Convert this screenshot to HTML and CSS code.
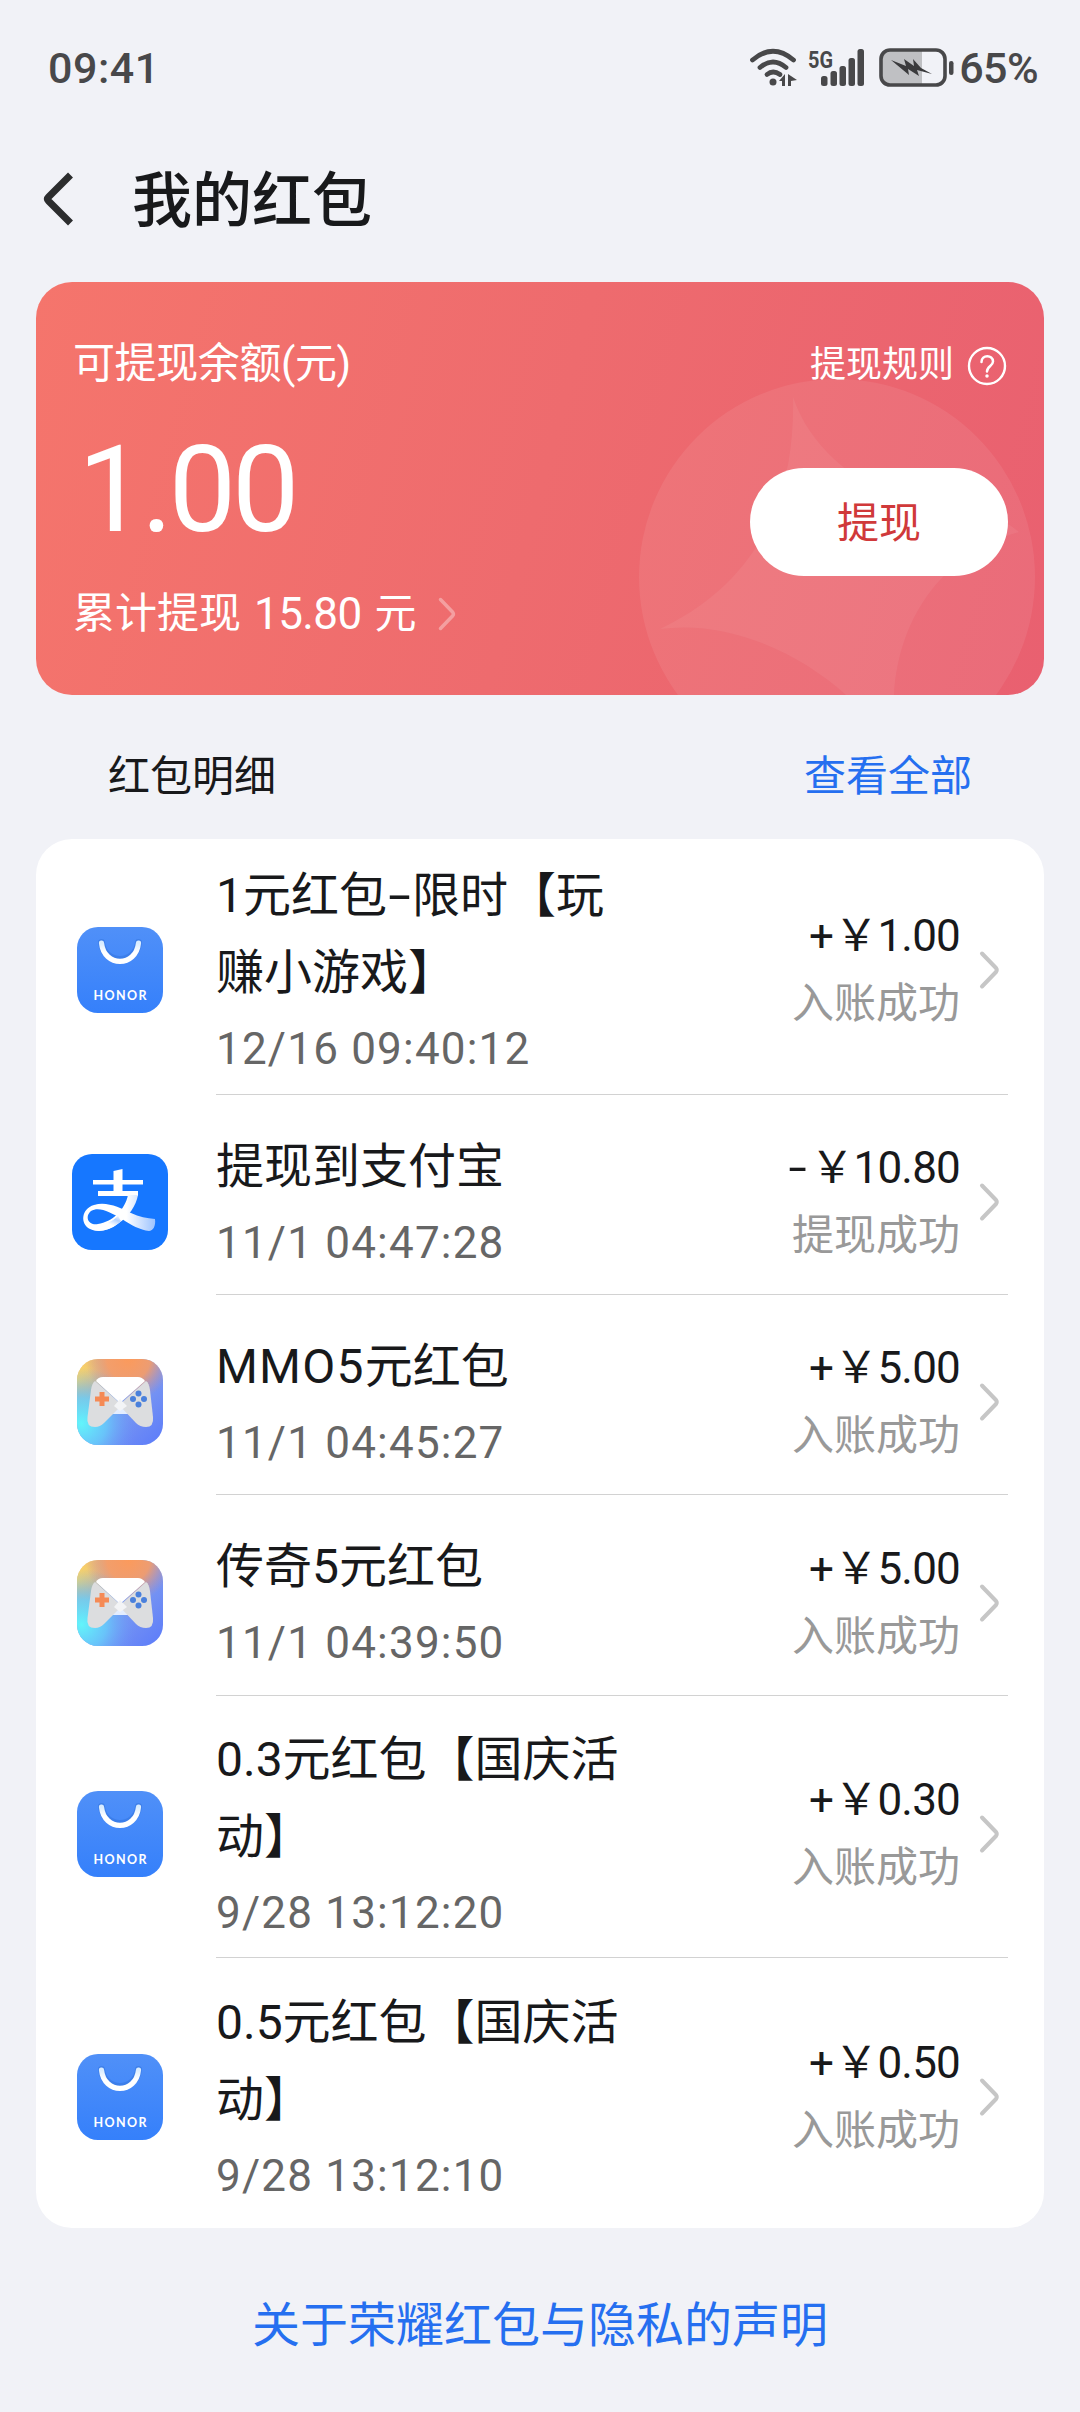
FILE: index.html
```html
<!DOCTYPE html>
<html lang="zh-CN">
<head>
<meta charset="utf-8">
<title>我的红包</title>
<link rel="stylesheet" href="styles.css">
</head>
<body>
<svg class="defs" width="0" height="0" aria-hidden="true">
  <defs>
    <linearGradient id="bagBg" x1="0" y1="0" x2="0" y2="1"><stop offset="0" stop-color="#5090f8"/><stop offset="1" stop-color="#3580fb"/></linearGradient>
    <linearGradient id="handle" x1="0" y1="0" x2="0" y2="1"><stop offset="0" stop-color="#d8ecff"/><stop offset=".5" stop-color="#fff"/></linearGradient>
    <linearGradient id="payTail" x1="0" y1="0" x2="1" y2="0"><stop offset="0" stop-color="#fff"/><stop offset=".6" stop-color="#fff"/><stop offset="1" stop-color="#9cc3ff"/></linearGradient>
    <linearGradient id="payLoop" x1="0" y1="1" x2="1" y2="0"><stop offset="0" stop-color="#fff"/><stop offset=".55" stop-color="#fff"/><stop offset=".8" stop-color="#b5d2ff"/><stop offset="1" stop-color="#fff"/></linearGradient>
    <linearGradient id="gameBg" x1="0" y1="0" x2="1" y2="1"><stop offset="0" stop-color="#fdbd5c"/><stop offset=".5" stop-color="#7e9bf0"/><stop offset="1" stop-color="#5b7bfa"/></linearGradient>
    <radialGradient id="gameOrange" cx=".6" cy="0" r=".5"><stop offset="0" stop-color="#fb9a5c"/><stop offset=".5" stop-color="#f79c66" stop-opacity=".9"/><stop offset="1" stop-color="#c98f9c" stop-opacity="0"/></radialGradient>
    <radialGradient id="gameYellow" cx="0" cy=".25" r=".5"><stop offset="0" stop-color="#ffe263"/><stop offset="1" stop-color="#ffd06a" stop-opacity="0"/></radialGradient>
    <radialGradient id="gameCyan" cx=".05" cy=".75" r=".65"><stop offset="0" stop-color="#62f5fb"/><stop offset=".45" stop-color="#66cbfb" stop-opacity=".85"/><stop offset="1" stop-color="#6a8ff8" stop-opacity="0"/></radialGradient>
    <symbol id="bag" viewBox="0 0 120 120">
      <rect x="17" y="17" width="86" height="86" rx="21" fill="url(#bagBg)"/>
      <path d="M41.500 32.500C44 55 76 55 78.500 32.500" fill="none" stroke="#2f6fd8" stroke-opacity=".45" stroke-width="7" stroke-linecap="round"/>
      <path d="M41.500 33C44 57.500 76 57.500 78.500 33" fill="none" stroke="url(#handle)" stroke-width="5.200" stroke-linecap="round"/>
      <text class="bag-text" x="60" y="89.500" text-anchor="middle" textLength="53">HONOR</text>
    </symbol>
    <symbol id="alipay" viewBox="0 2 120 120">
      <rect x="12" y="14" width="96" height="96" rx="20" fill="#1677ff"/>
      <path d="M33 40H83V44.500H33ZM38 51H78V56H38Z" fill="#fff"/>
      <path d="M53.500 31L62.500 29V54H53.500Z" fill="#fff"/>
      <path d="M68 55H78C76 66 69 76 59 83C49 91 38 93 30 89C20 84 21 69 34 65C47 61 60 68 71 73C79 77 87 78 95 79C96 86 93 91 89 91C80 90 71 85 62 79C50 72 39 66 31 71C24 77 29 86 38 84C52 82 65 70 68 55Z" fill="url(#payTail)"/>
      <path d="M27 80C30 89 48 86 58 76L61 81C50 92 35 93 28 87Z" fill="url(#payLoop)"/>
    </symbol>
    <symbol id="game" viewBox="0 -3 120 120">
      <rect x="17" y="14" width="86" height="86" rx="21" fill="url(#gameBg)"/>
      <rect x="17" y="14" width="86" height="86" rx="21" fill="url(#gameYellow)"/>
      <rect x="17" y="14" width="86" height="86" rx="21" fill="url(#gameOrange)"/>
      <rect x="17" y="14" width="86" height="86" rx="21" fill="url(#gameCyan)"/>
      <path d="M36 36Q38 32 43 32H78Q82 32 85 36L60 58Z" fill="#fff"/>
      <path d="M49 69L60 56L72 69Z" fill="#e3edff"/>
      <path d="M35 36L62 60L44 78Q40 82 35 82Q26 82 27.500 72L31 45Q32 38 35 36Z" fill="#dcdddf"/>
      <path d="M86 36L59 60L76 78Q80 82 86 82Q94 82 93 72L90 45Q89 38 86 36Z" fill="#dcdddf"/>
      <path d="M60 54L54 61L60 66L67 61Z" fill="#f3f4f6"/>
      <path d="M42 47V61M35 54H49" stroke="#f58a55" stroke-width="5"/>
      <g fill="#4a80dc"><circle cx="78.500" cy="48.500" r="3"/><circle cx="78.500" cy="59.500" r="3"/><circle cx="73" cy="54" r="3"/><circle cx="84" cy="54" r="3"/></g>
    </symbol>
    <symbol id="next" viewBox="0 0 24 40"><path d="M4 3.500L18 18Q19.500 20 18 22L4 36.500" fill="none" stroke="currentColor" stroke-width="4" stroke-linecap="round" stroke-linejoin="round"/></symbol>
  </defs>
</svg>

<div class="status-bar">
  <span class="clock">09:41</span>
  <div class="indicators">
    <svg class="wifi" width="50" height="40" viewBox="0 0 50 40">
      <g fill="none" stroke="#48484a" stroke-width="4.800" stroke-linecap="round"><path d="M3.500 12Q24 -5.500 44.500 12"/><path d="M11 19.500Q24 8.500 37 19.500"/><path d="M18 26.500Q24 21.500 31 26.500"/></g>
      <circle cx="24" cy="34" r="3.500" fill="#48484a"/>
      <path d="M30 33L36 26V38H33V33ZM39 26L48 32L42 33V38H39Z" fill="#48484a"/>
    </svg>
    <svg class="signal" width="58" height="40" viewBox="0 0 58 40">
      <text class="network" x="0" y="19.500" textLength="25" lengthAdjust="spacingAndGlyphs">5G</text>
      <g fill="#48484a"><rect x="13" y="28" width="6.500" height="10" rx="2.500"/><rect x="22.500" y="23" width="6.500" height="15" rx="2.500"/><rect x="31.500" y="18" width="6.500" height="20" rx="2.500"/><rect x="40.500" y="10" width="6.500" height="28" rx="2.500"/><rect x="49.500" y="1" width="6.500" height="37" rx="2.500"/></g>
    </svg>
    <svg class="battery" width="76" height="40" viewBox="0 0 76 40">
      <path d="M11 2.500H43V36.500H11Q2.500 36.500 2.500 28V11Q2.500 2.500 11 2.500Z" fill="#bfc0c3"/>
      <rect x="2" y="2" width="64" height="35" rx="9" fill="none" stroke="#48484a" stroke-width="3.600"/>
      <rect x="70" y="13" width="4.500" height="14" rx="2.200" fill="#48484a"/>
      <path d="M12 12L27 18L25 11L35 18L34 11L42 20L53 26L38 22L40 28L29 21L30 27Z" fill="#3a3a3c"/>
    </svg>
    <span class="charge">65%</span>
  </div>
</div>

<header class="title-bar">
  <svg width="36" height="60" viewBox="0 0 36 60"><path d="M29.500 6L7.500 28Q5.500 30 7.500 32L29.500 54" fill="none" stroke="#2c2d2e" stroke-width="7" stroke-linejoin="round"/></svg>
  <h1>我的红包</h1>
</header>

<section class="balance">
  <svg class="emblem" width="400" height="413" viewBox="0 0 400 413">
    <circle cx="199" cy="295" r="198" fill="#fff" fill-opacity=".075"/>
    <path d="M155 115C172 166 215 195 250 215C300 225 345 220 381 250C310 270 261 330 256 413H208C160 370 90 338 22 347C100 310 158 240 155 115Z" fill="#fff" fill-opacity=".06"/>
  </svg>
  <div class="balance-info">
    <div class="balance-label">可提现余额(元)</div>
    <div class="balance-value">1.00</div>
    <div class="balance-total"><span>累计提现</span><span class="figure">15.80</span><span>元</span><svg width="21" height="36"><use href="#next"/></svg></div>
  </div>
  <div class="balance-actions">
    <div class="rules"><span>提现规则</span>
      <svg width="40" height="40" viewBox="0 0 40 40" fill="none" stroke="#fff"><circle cx="20" cy="20" r="18" stroke-width="2.400"/><path d="M14.500 16C14.500 8.500 26 8.500 26 15.500C26 20 20 20 20 25.500" stroke-width="2.500" stroke-linecap="round"/><circle cx="20" cy="30" r="1" stroke-width="1.500" fill="#fff"/></svg>
    </div>
    <button class="withdraw">提现</button>
  </div>
</section>

<div class="section-head"><h2>红包明细</h2><a>查看全部</a></div>

<ul class="records">
  <li class="record first">
    <svg class="app" width="120" height="120"><use href="#bag"/></svg>
    <div class="body"><div class="info"><div class="name">1元红包<span class="dash">-</span>限时【玩<br>赚小游戏】</div><div class="time">12/16 09:40:12</div></div>
    <div class="result"><div class="amount"><i>+</i>￥1.00</div><div class="state">入账成功</div></div><svg class="arrow" width="24" height="40"><use href="#next"/></svg></div>
  </li>
  <li class="record">
    <svg class="app" width="120" height="120"><use href="#alipay"/></svg>
    <div class="body"><div class="info"><div class="name">提现到支付宝</div><div class="time">11/1 04:47:28</div></div>
    <div class="result"><div class="amount"><i class="minus">-</i>￥10.80</div><div class="state">提现成功</div></div><svg class="arrow" width="24" height="40"><use href="#next"/></svg></div>
  </li>
  <li class="record">
    <svg class="app" width="120" height="120"><use href="#game"/></svg>
    <div class="body"><div class="info"><div class="name"><span class="latin">MMO5</span>元红包</div><div class="time">11/1 04:45:27</div></div>
    <div class="result"><div class="amount"><i>+</i>￥5.00</div><div class="state">入账成功</div></div><svg class="arrow" width="24" height="40"><use href="#next"/></svg></div>
  </li>
  <li class="record fourth">
    <svg class="app" width="120" height="120"><use href="#game"/></svg>
    <div class="body"><div class="info"><div class="name">传奇5元红包</div><div class="time">11/1 04:39:50</div></div>
    <div class="result"><div class="amount"><i>+</i>￥5.00</div><div class="state">入账成功</div></div><svg class="arrow" width="24" height="40"><use href="#next"/></svg></div>
  </li>
  <li class="record tall">
    <svg class="app" width="120" height="120"><use href="#bag"/></svg>
    <div class="body"><div class="info"><div class="name">0.3元红包【国庆活<br>动】</div><div class="time">9/28 13:12:20</div></div>
    <div class="result"><div class="amount"><i>+</i>￥0.30</div><div class="state">入账成功</div></div><svg class="arrow" width="24" height="40"><use href="#next"/></svg></div>
  </li>
  <li class="record last">
    <svg class="app" width="120" height="120"><use href="#bag"/></svg>
    <div class="body"><div class="info"><div class="name">0.5元红包【国庆活<br>动】</div><div class="time">9/28 13:12:10</div></div>
    <div class="result"><div class="amount"><i>+</i>￥0.50</div><div class="state">入账成功</div></div><svg class="arrow" width="24" height="40"><use href="#next"/></svg></div>
  </li>
</ul>

<footer class="statement"><a>关于荣耀红包与隐私的声明</a></footer>
</body>
</html>
```
FILE: styles.css
```css
* { box-sizing: border-box; margin: 0; padding: 0; }
body {
  width: 1080px;
  height: 2412px;
  overflow: hidden;
  display: flex;
  flex-direction: column;
  background: #f1f2f7;
  color: #18191b;
  font-family: Roboto, "Noto Sans CJK SC", sans-serif;
  font-size: 42px;
}
.defs { position: absolute; }
svg { display: block; flex: none; overflow: visible; }
h1, h2 { font-weight: 400; }

.status-bar {
  height: 136px;
  padding: 0 42px 0 48px;
  display: flex;
  align-items: center;
  justify-content: space-between;
  color: #48484a;
}
.clock { font-size: 43px; font-weight: 500; line-height: 50px; letter-spacing: .5px; }
.indicators { display: flex; align-items: center; }
.signal { margin-left: 9px; }
.battery { margin-left: 13px; }
.charge { margin-left: 4px; font-size: 43px; font-weight: 500; line-height: 50px; letter-spacing: -.6px; }
.network { font: 700 24px Roboto, sans-serif; fill: #48484a; }

.title-bar {
  height: 146px;
  padding: 0 41px 20px;
  display: flex;
  align-items: center;
  gap: 55px;
}
.title-bar h1 { padding-top: 5px; font-size: 60px; font-weight: 500; line-height: 80px; }

.balance {
  position: relative;
  height: 413px;
  margin: 0 36px;
  padding: 0 36px 0 37px;
  border-radius: 36px;
  overflow: hidden;
  display: flex;
  justify-content: space-between;
  background: linear-gradient(105deg, #f5756c 0%, #ee6b6e 50%, #e96070 100%);
  color: #fff;
}
.emblem { position: absolute; right: 6px; top: 0; }
.balance-info, .balance-actions { position: relative; display: flex; flex-direction: column; }
.balance-label { margin-top: 51px; line-height: 62px; letter-spacing: -.4px; }
.balance-value { margin: 25px 0 0 5px; font-size: 120px; line-height: 140px; letter-spacing: -4.200px; }
.balance-total { margin-top: 23px; display: flex; align-items: center; gap: 13px; line-height: 62px; }
.balance-total svg { margin-left: 7px; color: #ffffff59; }
.figure { font-size: 44px; letter-spacing: -.6px; }
.balance-actions { align-items: flex-end; }
.rules { margin: 57px 1px 0 0; display: flex; align-items: center; gap: 13px; font-size: 36px; line-height: 53px; }
.withdraw {
  width: 258px;
  height: 108px;
  margin-top: 76px;
  padding-bottom: 6px;
  border: 0;
  border-radius: 54px;
  background: #fff;
  color: #d0393a;
  font: inherit;
}

.section-head {
  height: 144px;
  padding: 10px 108px 0;
  display: flex;
  align-items: center;
  justify-content: space-between;
}
.section-head h2 { font-size: 42px; }
.section-head a { color: #256ff0; }

.records {
  margin: 0 36px;
  border-radius: 36px;
  background: #fff;
  list-style: none;
}
.record { height: 200px; display: flex; align-items: stretch; }
.record.first { height: 256px; }
.record.fourth { height: 201px; }
.record.tall { height: 262px; }
.record.last { height: 270px; }
.app { align-self: center; margin-left: 24px; position: relative; top: 7px; }
.first .app { top: 3px; }
.last .app { top: 4px; }
.body {
  flex: 1;
  margin: 0 36px;
  padding: 15px 6px 0 0;
  display: flex;
  align-items: center;
  border-bottom: 1px solid #d2d2d2;
}
.first .body { padding-top: 7px; }
.last .body { border: 0; padding-top: 8px; }
.info { flex: 1; padding-top: 4px; }
.name { font-size: 48px; line-height: 77px; white-space: nowrap; }
.latin { letter-spacing: 1.200px; }
.dash { display: inline-block; width: 25px; text-align: center; transform: scaleX(1.7); }
.time { font-size: 44px; line-height: 76px; letter-spacing: 1.200px; color: #666; }
.result { text-align: right; }
.amount { font-size: 44px; line-height: 67px; letter-spacing: -.8px; }
.amount i { display: inline-block; width: 26px; text-align: center; font-style: normal; }
.amount .minus { transform: scaleX(1.5); }
.state { line-height: 67px; color: #999; }
.arrow { margin-left: 18px; color: #c6c6c6; }
.bag-text { font: 700 12.500px Lato, sans-serif; fill: #fff; }
.statement { margin-top: 62px; text-align: center; font-size: 48px; line-height: 72px; color: #256ff0; }
```
